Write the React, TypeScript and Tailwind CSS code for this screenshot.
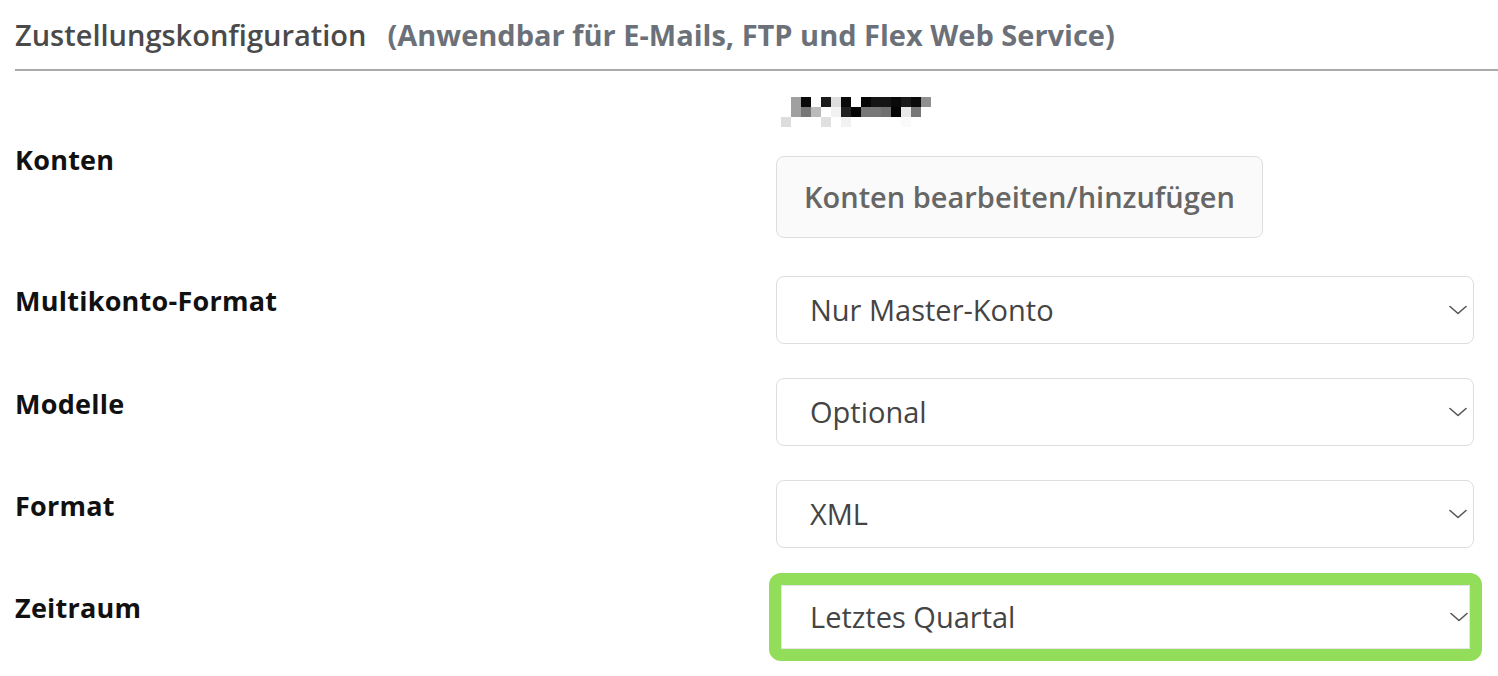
import React from "react";

const W = "#ffffff";
const mosaic: string[][] = [
  [W, "#a0a0a0", "#0a0a0a", W, "#1c1c1c", "#dddddd", "#0a0a0a", W, "#050505", "#151515", "#151515", "#0a0a0a", "#1a1a1a", "#0a0a0a", "#909090"],
  [W, "#a0a0a0", "#777777", "#bbbbbb", W, "#f2f2f2", "#222222", "#050505", "#777777", "#777777", "#707070", "#050505", "#e8e8e8", "#777777", W],
  ["#dddddd", W, W, W, "#e0e0e0", W, "#f2f2f2", W, W, W, W, W, "#fafafa", W, W],
];

function Chevron() {
  return (
    <svg width="18" height="10" viewBox="0 0 18 10" fill="none">
      <path d="M1 1.5L9 8.5L17 1.5" stroke="#555555" strokeWidth="1.6" strokeLinecap="round" strokeLinejoin="round" />
    </svg>
  );
}

function Select({ value }: { value: string }) {
  return (
    <div className="flex h-[68px] w-[698px] items-center justify-between rounded-[8px] border border-[#dedede] bg-white pl-[33px] pr-[6px]">
      <span className="text-[29px] leading-[36px] text-[#444444]">{value}</span>
      <Chevron />
    </div>
  );
}

function Label({ text, pt }: { text: string; pt: string }) {
  return (
    <div className={`w-[761px] shrink-0 ${pt}`}>
      <span className="block text-[27px] font-bold leading-[36px] tracking-[0.25px] text-[#111111]">{text}</span>
    </div>
  );
}

export default function App() {
  return (
    <div className="min-h-[676px] w-[1498px] bg-white pl-[15px]" style={{ fontFamily: '"Open Sans", "Liberation Sans", sans-serif' }}>
      <div className="flex h-[69px] items-center">
        <span className="text-[29px] font-semibold leading-[36px] text-[#4a4a4a]">Zustellungskonfiguration</span>
        <span className="ml-[21px] text-[29px] font-bold leading-[36px] text-[#6c7179]">(Anwendbar für E-Mails, FTP und Flex Web Service)</span>
      </div>
      <div className="h-[2px] w-full bg-[#aaaaaa]" />

      <div className="flex">
        <div className="w-[761px] shrink-0 pt-[71px]">
          <span className="block text-[27px] font-bold leading-[36px] tracking-[0.25px] text-[#111111]">Konten</span>
        </div>
        <div className="flex flex-col items-start">
          <div className="mt-[26px] ml-[5px] flex flex-col">
            {mosaic.map((row, i) => (
              <div key={i} className="flex">
                {row.map((c, j) => (
                  <div key={j} className="h-[10px] w-[10px]" style={{ backgroundColor: c }} />
                ))}
              </div>
            ))}
          </div>
          <button className="mt-[29px] flex h-[82px] items-center rounded-[8px] border border-[#dedede] bg-[#fafafa] px-[27px] text-[29px] font-semibold leading-[36px] text-[#666666]">
            Konten bearbeiten/hinzufügen
          </button>
        </div>
      </div>

      <div className="mt-[38px] flex">
        <Label text="Multikonto-Format" pt="pt-[7px]" />
        <Select value="Nur Master-Konto" />
      </div>

      <div className="mt-[34px] flex">
        <Label text="Modelle" pt="pt-[8px]" />
        <Select value="Optional" />
      </div>

      <div className="mt-[34px] flex">
        <Label text="Format" pt="pt-[8px]" />
        <Select value="XML" />
      </div>

      <div className="mt-[25px] flex">
        <div className="w-[754px] shrink-0 pt-[17px]">
          <span className="block text-[27px] font-bold leading-[36px] tracking-[0.25px] text-[#111111]">Zeitraum</span>
        </div>
        <div className="h-[88px] w-[713px] rounded-[12px] border-[12px] border-[#92dd5a] bg-white">
          <div className="flex h-full items-center justify-between border border-[#e6e6e6] pl-[28px] pr-[1px]">
            <span className="text-[29px] leading-[36px] text-[#444444]">Letztes Quartal</span>
            <Chevron />
          </div>
        </div>
      </div>
    </div>
  );
}
